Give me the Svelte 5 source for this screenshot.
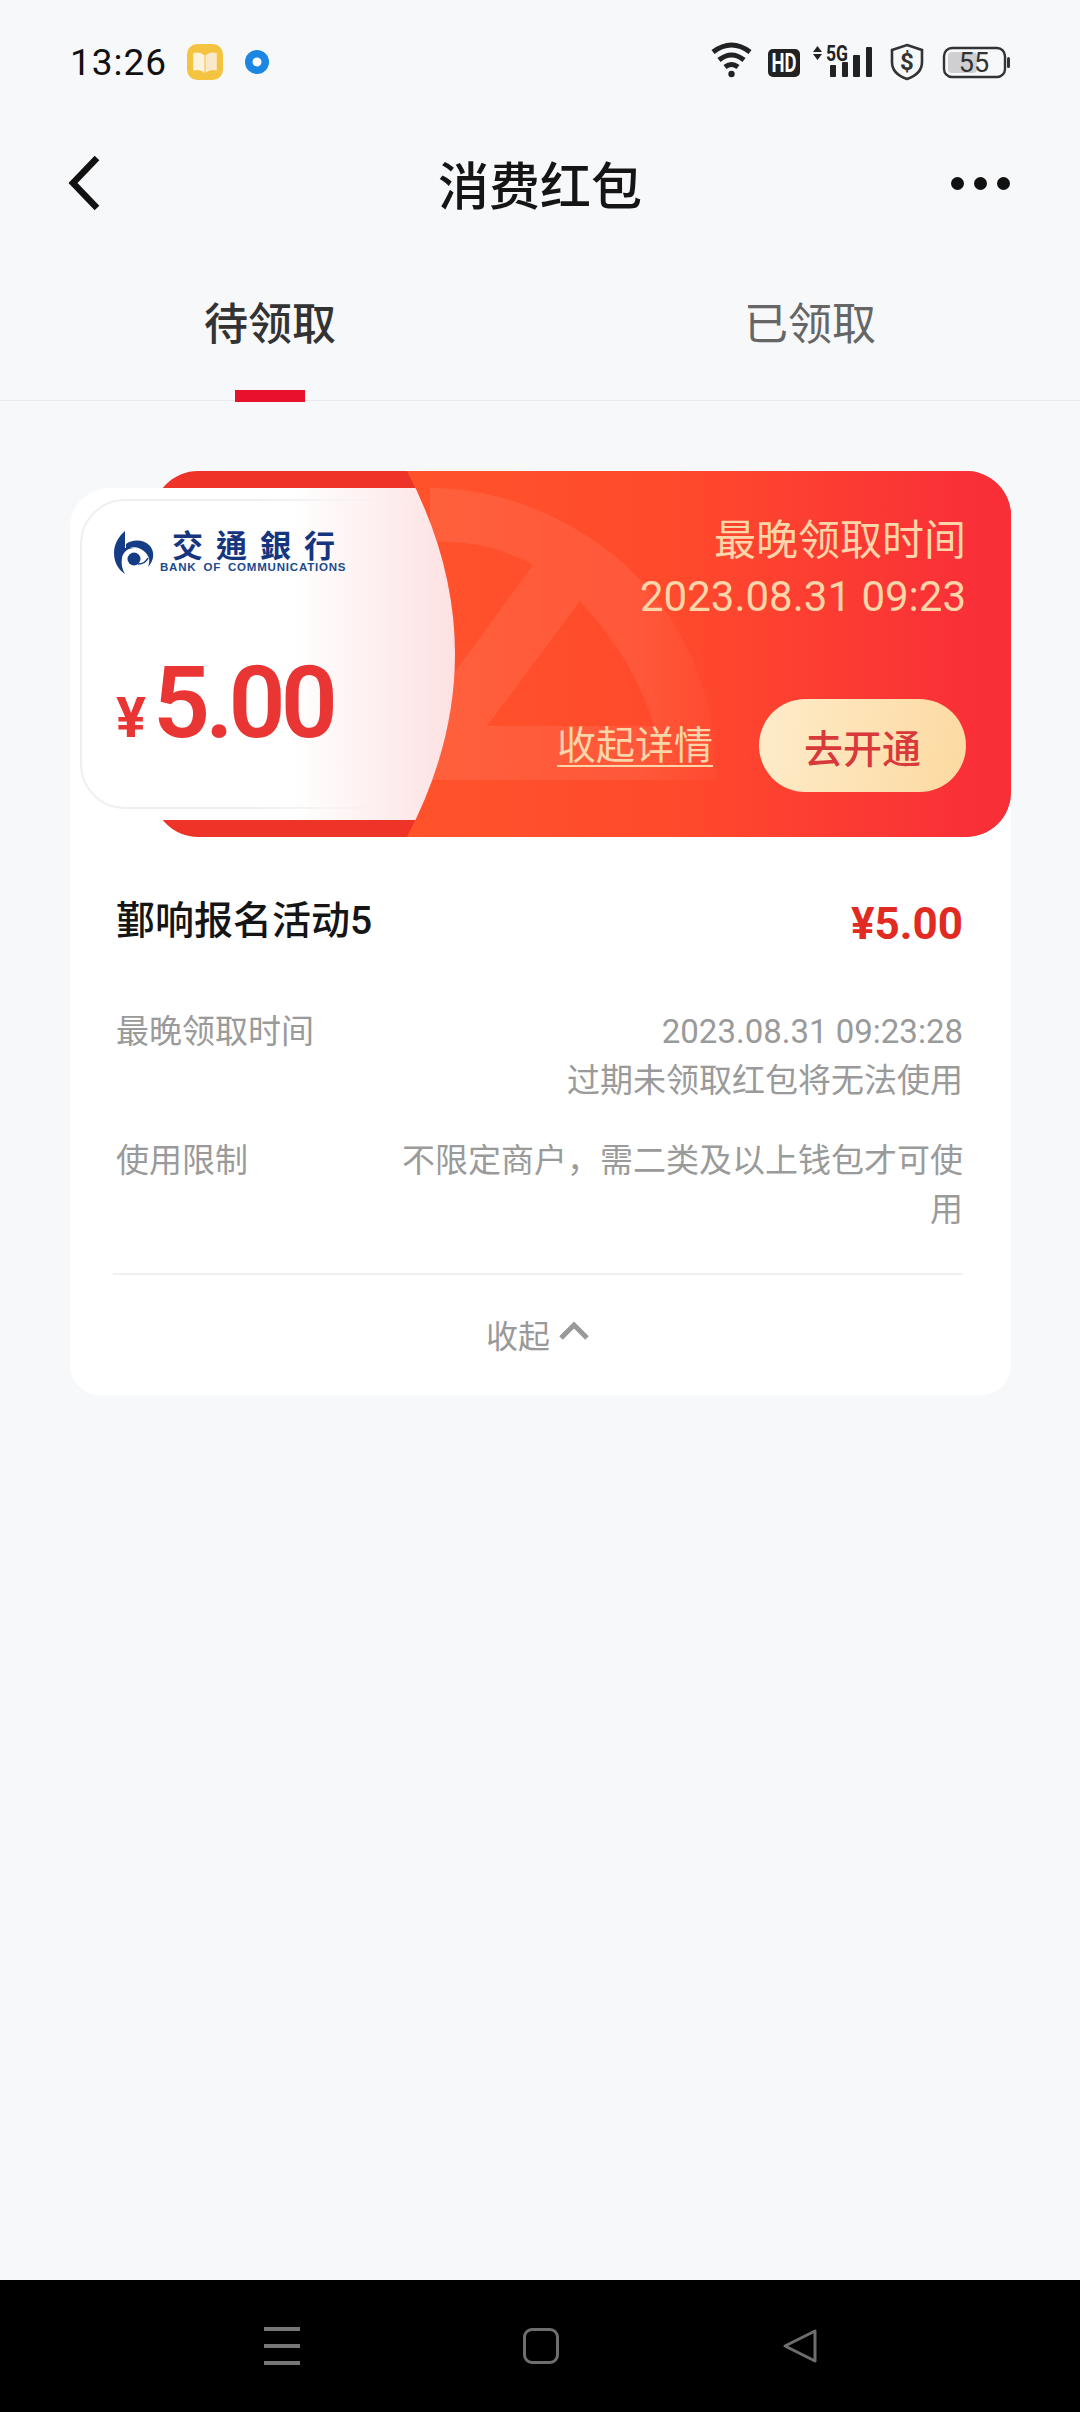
<script>
    const tabs = [
        { label: '待领取', active: true },
        { label: '已领取', active: false }
    ];
</script>

<div class="page">
    <div class="status">
        <div class="status-left">
            <span class="time">13:26</span>
            <svg class="book" width="36" height="36" viewBox="0 0 35 35">
                <rect width="35" height="35" rx="10" fill="#f4c440" />
                <path d="M6 9 Q12 7 17 11 V28 Q12 24 6 26 Z" fill="#fdf3dc" />
                <path d="M29 9 Q23 7 18 11 V28 Q23 24 29 26 Z" fill="#f8e9c8" />
            </svg>
            <svg class="dot" width="26" height="26" viewBox="0 0 26 26">
                <circle cx="13" cy="13" r="12" fill="#1c86e3" />
                <circle cx="13" cy="13" r="4.5" fill="#fff" />
            </svg>
        </div>
        <svg class="status-icons" width="300" height="40" viewBox="711 42 300 40">
            <g fill="none" stroke="#222" stroke-width="5">
                <path d="M713 52 Q731.5 38 750 52" />
                <path d="M719 60 Q731.5 50 744 60" />
                <path d="M725 67 Q731.5 62 738 67" />
            </g>
            <circle cx="731.5" cy="74" r="3.2" fill="#222" />
            <rect x="768" y="49" width="32" height="28" rx="5" fill="#222" />
            <text x="784" y="72" class="hd" textLength="25" lengthAdjust="spacingAndGlyphs">HD</text>
            <path d="M817.5 46 L822 52 H813 Z M817.5 60 L822 54 H813 Z" fill="#222" />
            <text x="837" y="61" class="five-g" textLength="22" lengthAdjust="spacingAndGlyphs">5G</text>
            <g fill="#222">
                <rect x="830" y="65" width="6" height="12" rx="1" />
                <rect x="842" y="62" width="6" height="15" rx="1" />
                <rect x="853" y="55" width="7" height="22" rx="1" />
                <rect x="866" y="47" width="6" height="30" rx="1" />
            </g>
            <path d="M907 45 L922 50 V62 Q922 74 907 79 Q892 74 892 62 V50 Z" fill="none" stroke="#333" stroke-width="2.6" />
            <text x="907" y="70" class="shield">$</text>
            <rect x="944" y="48" width="61" height="29" rx="8" fill="none" stroke="#333" stroke-width="2.4" />
            <rect x="948" y="52" width="29" height="21" rx="4" fill="#cfcfd1" />
            <rect x="1007" y="57" width="3" height="11" rx="1.5" fill="#333" />
            <text x="974" y="72" class="battery">55</text>
        </svg>
    </div>

    <header class="nav">
        <svg width="34" height="56" viewBox="0 0 34 56">
            <path d="M30 3 L6 28 L30 53" fill="none" stroke="#111" stroke-width="6.5" />
        </svg>
        <h1>消费红包</h1>
        <div class="more"><i></i><i></i><i></i></div>
    </header>

    <div class="tabs">
        {#each tabs as tab}
            <div class="tab" class:active={tab.active}>{tab.label}</div>
        {/each}
    </div>

    <main>
        <section class="card">
            <div class="ticket">
                <svg class="ticket-bg" width="941" height="366" viewBox="70 471 941 366">
                    <defs>
                        <linearGradient id="orange" gradientUnits="userSpaceOnUse" x1="400" y1="0" x2="1011" y2="0">
                            <stop offset="0" stop-color="#ff532b" />
                            <stop offset="0.45" stop-color="#ff4a2c" />
                            <stop offset="0.95" stop-color="#f92f38" />
                        </linearGradient>
                        <linearGradient id="paper" gradientUnits="userSpaceOnUse" x1="290" y1="0" x2="455" y2="0">
                            <stop offset="0" stop-color="#fff" />
                            <stop offset="1" stop-color="#fde1e2" />
                        </linearGradient>
                        <linearGradient id="paper-line" gradientUnits="userSpaceOnUse" x1="250" y1="0" x2="420" y2="0">
                            <stop offset="0" stop-color="#efefef" />
                            <stop offset="1" stop-color="#efefef" stop-opacity="0" />
                        </linearGradient>
                        <linearGradient id="mark" gradientUnits="userSpaceOnUse" x1="440" y1="0" x2="720" y2="0">
                            <stop offset="0" stop-color="#fff" stop-opacity="0.08" />
                            <stop offset="0.7" stop-color="#fff" stop-opacity="0.07" />
                            <stop offset="1" stop-color="#fff" stop-opacity="0.015" />
                        </linearGradient>
                        <clipPath id="body"><rect x="153" y="471" width="858" height="366" rx="45" /></clipPath>
                        <clipPath id="stub"><path d="M0 471 H407 Q503 654 407 837 H0 Z" /></clipPath>
                    </defs>
                    <g clip-path="url(#body)">
                        <rect x="153" y="471" width="858" height="366" fill="#ee3328" />
                        <path d="M407 471 Q503 654 407 837 H1011 V471 Z" fill="url(#orange)" />
                        <path fill-rule="evenodd" fill="url(#mark)"
                            d="M430 488 C560 488 717 590 717 780 H430 Z
                               M430 542 Q490 540 533 565 L455 672 L430 700 Z
                               M580 601 Q635 660 654 726 H487 Z" />
                    </g>
                    <g clip-path="url(#stub)">
                        <rect x="70" y="488" width="400" height="332" rx="40" fill="url(#paper)" />
                        <rect x="81" y="500" width="420" height="308" rx="44" fill="none" stroke="url(#paper-line)" stroke-width="2" />
                    </g>
                </svg>

                <div class="stub">
                    <div class="bank">
                        <svg width="40" height="43" viewBox="0 0 40 43">
                            <path d="M11 0 C4 6 0 14 0 22 C0 32 5 39 11 43 C8 38 7 33 8 27 C9 21 14 17 20 17 L11 17 Z" fill="#143d86" />
                            <path d="M12 13 C18 8 30 8 36 15 C41 21 40 30 34 36 C36 30 36 26 31 21 C25 15 17 15 12 19 Z" fill="#143d86" />
                            <circle cx="20" cy="28" r="6.5" fill="#143d86" />
                            <path d="M24 33 Q31 33 34 27" fill="none" stroke="#143d86" stroke-width="1.6" />
                        </svg>
                        <div class="bank-name">
                            <span class="bank-cn">交通銀行</span>
                            <span class="bank-en">BANK OF COMMUNICATIONS</span>
                        </div>
                    </div>
                    <div class="amount"><span class="yen">¥</span><span class="num">5.00</span></div>
                </div>

                <div class="info">
                    <p>最晚领取时间</p>
                    <p>2023.08.31 09:23</p>
                    <div class="actions">
                        <span class="link">收起详情</span>
                        <button type="button">去开通</button>
                    </div>
                </div>
            </div>

            <div class="details">
                <div class="head">
                    <span class="name">鄞响报名活动5</span>
                    <span class="price">¥5.00</span>
                </div>
                <div class="row">
                    <span>最晚领取时间</span>
                    <div class="value">2023.08.31 09:23:28<br>过期未领取红包将无法使用</div>
                </div>
                <div class="row">
                    <span>使用限制</span>
                    <div class="value">不限定商户，需二类及以上钱包才可使用</div>
                </div>
            </div>

            <div class="fold">
                <span>收起</span>
                <svg width="32" height="20" viewBox="0 0 32 20">
                    <path d="M3 17 L16 4 L29 17" fill="none" stroke="#999" stroke-width="5" />
                </svg>
            </div>
        </section>
    </main>

    <footer class="sysnav">
        <div class="menu"><i></i><i></i><i></i></div>
        <div class="home"></div>
        <svg width="36" height="36" viewBox="0 0 36 36">
            <path d="M33 3 V33 L3 18 Z" fill="none" stroke="#6e6e6e" stroke-width="3" stroke-linejoin="round" />
        </svg>
    </footer>
</div>

<style>
    :global(body) {
        background: #f7f8fa;
    }

    .page {
        display: flex;
        flex-direction: column;
        height: 2412px;
        width: 1080px;
        overflow: hidden;
        background: #f7f8fa;
        font-family: Roboto, "Noto Sans CJK SC", sans-serif;
    }

    .status {
        display: flex;
        align-items: center;
        justify-content: space-between;
        height: 124px;
        flex: none;
        padding: 0 69px 0 70px;
        box-sizing: border-box;
    }

    .status-left {
        display: flex;
        align-items: center;
    }

    .time {
        font-size: 37px;
        color: #111;
        letter-spacing: 1px;
        width: 117px;
    }

    .dot {
        margin-left: 21px;
    }

    .hd {
        font: 700 25px "Roboto", sans-serif;
        fill: #fff;
        text-anchor: middle;
    }

    .five-g {
        font: 700 22px "Roboto", sans-serif;
        fill: #222;
        text-anchor: middle;
    }

    .shield {
        font: 700 24px "Roboto", sans-serif;
        fill: #333;
        text-anchor: middle;
    }

    .battery {
        font: 400 27px "Roboto", sans-serif;
        fill: #333;
        text-anchor: middle;
    }

    .nav {
        display: flex;
        align-items: center;
        justify-content: space-between;
        position: relative;
        height: 118px;
        flex: none;
        padding: 0 70px 0 67px;
        box-sizing: border-box;
    }

    .nav h1 {
        margin: 0;
        font-size: 51px;
        font-weight: 500;
        color: #151515;
        position: absolute;
        left: 0;
        right: 0;
        text-align: center;
        pointer-events: none;
    }

    .more {
        display: flex;
        gap: 10px;
    }

    .more i {
        width: 13px;
        height: 13px;
        border-radius: 50%;
        background: #111;
    }

    .tabs {
        display: grid;
        grid-template-columns: 1fr 1fr;
        height: 158px;
        flex: none;
        border-bottom: 1px solid #e9eaec;
    }

    .tab {
        position: relative;
        text-align: center;
        font-size: 44px;
        line-height: 60px;
        padding-top: 53px;
        color: #666;
    }

    .tab.active {
        color: #333;
        font-weight: 500;
    }

    .tab.active::after {
        content: "";
        position: absolute;
        left: 50%;
        bottom: -2px;
        width: 70px;
        height: 12px;
        margin-left: -35px;
        background: #e8102a;
    }

    main {
        flex: 1;
        padding: 87px 69px 0 70px;
    }

    .card {
        display: flow-root;
        background: #fff;
        border-radius: 40px 40px 30px 30px;
    }

    .ticket {
        position: relative;
        display: flex;
        height: 366px;
        margin-top: -17px;
    }

    .ticket-bg {
        position: absolute;
        left: 0;
        top: 0;
    }

    .stub,
    .info {
        position: relative;
    }

    .stub {
        width: 385px;
        padding: 60px 0 0 44px;
        box-sizing: border-box;
    }

    .bank {
        display: flex;
        gap: 6px;
        height: 43px;
    }

    .bank-name {
        display: flex;
        flex-direction: column;
        align-items: flex-start;
    }

    .bank-cn {
        font-family: "Noto Sans CJK TC", sans-serif;
        font-size: 31px;
        line-height: 32px;
        font-weight: 700;
        color: #16357f;
        letter-spacing: 13px;
        margin-left: 12px;
        margin-top: -3px;
        white-space: nowrap;
    }

    .bank-en {
        font-family: "Liberation Sans", sans-serif;
        font-size: 11.5px;
        line-height: 12px;
        margin-top: 1px;
        font-weight: 700;
        color: #1b4a8c;
        letter-spacing: 0.8px;
        word-spacing: 3px;
        white-space: nowrap;
    }

    .amount {
        display: flex;
        align-items: baseline;
        margin-top: 74px;
        color: #ea3535;
        font-weight: 700;
    }

    .yen {
        font-size: 56px;
        margin-left: 2px;
    }

    .num {
        font-size: 100px;
        line-height: 110px;
        font-weight: 600;
        letter-spacing: -5px;
        margin-left: 7px;
    }

    .info {
        flex: 1;
        display: flex;
        flex-direction: column;
        align-items: flex-end;
        padding: 42px 45px 45px 0;
        color: #fcd5a8;
        font-size: 42px;
        line-height: 56px;
    }

    .info p {
        margin: 0;
    }

    .actions {
        display: flex;
        align-items: center;
        gap: 46px;
        margin-top: auto;
    }

    .link {
        font-size: 39px;
        text-decoration: underline;
        text-underline-offset: 6px;
        text-decoration-thickness: 2px;
    }

    button {
        width: 207px;
        height: 93px;
        border: 0;
        border-radius: 47px;
        background: linear-gradient(100deg, #fdecca, #fdd9a0);
        color: #d8393a;
        font-family: inherit;
        font-size: 39px;
        font-weight: 500;
    }

    .details {
        padding: 62px 48px 0 46px;
    }

    .head {
        display: flex;
        justify-content: space-between;
        line-height: 44px;
    }

    .name {
        font-size: 39px;
        font-weight: 500;
        color: #151515;
    }

    .price {
        font-size: 44px;
        font-weight: 700;
        color: #e12b22;
        position: relative;
        top: 3px;
    }

    .row {
        display: flex;
        justify-content: space-between;
        font-size: 33px;
        line-height: 48.5px;
        color: #9a9a9a;
        margin-top: 32px;
    }

    .head + .row {
        margin-top: 65px;
    }

    .value {
        width: 570px;
        text-align: right;
    }

    .fold {
        display: flex;
        align-items: center;
        justify-content: center;
        gap: 8px;
        height: 122px;
        margin: 39px 48px 0 43px;
        padding-bottom: 2px;
        border-top: 2px solid #f0f0f0;
        box-sizing: border-box;
        font-size: 32px;
        color: #999;
    }

    .fold svg {
        margin-top: -6px;
    }

    .sysnav {
        display: flex;
        align-items: center;
        height: 132px;
        flex: none;
        background: #000;
        padding: 0 262px 0 264px;
        justify-content: space-between;
    }

    .menu {
        display: flex;
        flex-direction: column;
        gap: 13.5px;
        width: 36px;
    }

    .menu i {
        height: 3.5px;
        background: #777;
    }

    .home {
        width: 30px;
        height: 30px;
        border: 3px solid #6e6e6e;
        border-radius: 9px;
    }
</style>
